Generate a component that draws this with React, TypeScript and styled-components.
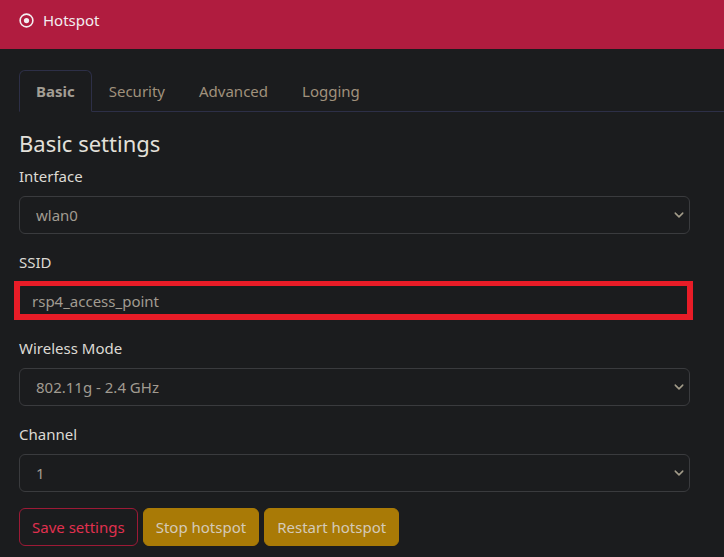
import React from "react";
import styled, { createGlobalStyle } from "styled-components";

const Global = createGlobalStyle`
  html, body { margin: 0; padding: 0; background: #1b1c1e; }
  body { font-family: "Noto Sans", "Open Sans", sans-serif; font-size: 15px; line-height: 24px; color: #dddad4; }
  * { box-sizing: border-box; }
`;

const Page = styled.div`
  min-height: 557px;
  background: #1b1c1e;
`;

const Header = styled.header`
  height: 49px;
  background: #b01c3f;
  display: flex;
  align-items: center;
  gap: 9px;
  padding: 0 0 9px 19px;
  color: #f3eef0;
  font-size: 15px;
`;

const Content = styled.main`
  padding: 21px 0 0 19px;
`;

const Tabs = styled.nav`
  display: flex;
  border-bottom: 1px solid #2d2f47;
`;

const Tab = styled.div<{ $active?: boolean }>`
  padding: 8px 16px;
  margin-bottom: -1px;
  border: 1px solid ${(p) => (p.$active ? "#2d2f47" : "transparent")};
  border-bottom-color: ${(p) => (p.$active ? "#1b1c1e" : "transparent")};
  border-radius: 6px 6px 0 0;
  color: ${(p) => (p.$active ? "#a39e94" : "#a0917c")};
  font-weight: ${(p) => (p.$active ? 700 : 400)};
  line-height: 24px;
`;

const Panel = styled.section`
  padding-right: 34px;
`;

const Heading = styled.h4`
  margin: 17px 0 6px;
  font-size: 22px;
  font-weight: 400;
  line-height: 29px;
  color: #e3e0da;
`;

const Group = styled.div`
  margin-bottom: 16px;
`;

const Label = styled.label`
  display: block;
  margin-bottom: 8px;
  color: #dddad4;
  line-height: 24px;
`;

const Select = styled.select`
  display: block;
  width: 100%;
  height: 38px;
  padding: 0 36px 0 16px;
  font: inherit;
  color: #a19b91;
  background-color: #1b1c1e;
  background-image: url("data:image/svg+xml,%3csvg xmlns='http://www.w3.org/2000/svg' viewBox='0 0 16 16'%3e%3cpath fill='none' stroke='%23a39c8a' stroke-linecap='round' stroke-linejoin='round' stroke-width='2.4' d='m2 5 6 6 6-6'/%3e%3c/svg%3e");
  background-repeat: no-repeat;
  background-position: right 4px center;
  background-size: 12px 10px;
  border: 1px solid #3a3b3e;
  border-radius: 6px;
  appearance: none;
  -webkit-appearance: none;
  outline: none;
`;

const Highlight = styled.div`
  position: relative;
`;

const Frame = styled.div`
  position: absolute;
  left: -5px;
  right: -3px;
  top: -1px;
  bottom: 0px;
  border: 6px solid #e81c27;
  border-top-width: 5px;
  pointer-events: none;
`;

const Input = styled.input`
  display: block;
  width: 100%;
  height: 38px;
  padding: 0 12px;
  font: inherit;
  color: #a19b91;
  background: #1b1c1e;
  border: 1px solid #3a3b3e;
  border-radius: 6px;
  outline: none;
`;

const Actions = styled.div`
  display: flex;
  gap: 5px;
`;

const Button = styled.button<{ $variant: "outline" | "warning" }>`
  height: 38px;
  padding: 0 12px;
  font: inherit;
  border-radius: 6px;
  border: 1px solid ${(p) => (p.$variant === "outline" ? "#9c1a36" : "#a97a06")};
  background: ${(p) => (p.$variant === "outline" ? "transparent" : "#a97a06")};
  color: ${(p) => (p.$variant === "outline" ? "#e0304f" : "#d4cab9")};
`;

const HotspotIcon = () => (
  <svg width="15" height="15" viewBox="0 0 16 16" fill="none">
    <circle cx="8" cy="8" r="6.8" stroke="#f3eef0" strokeWidth="1.7" />
    <circle cx="8" cy="8" r="2.8" fill="#f3eef0" />
  </svg>
);

export default function App() {
  return (
    <Page>
      <Global />
      <Header>
        <HotspotIcon />
        <span>Hotspot</span>
      </Header>
      <Content>
        <Tabs>
          <Tab $active>Basic</Tab>
          <Tab>Security</Tab>
          <Tab>Advanced</Tab>
          <Tab>Logging</Tab>
        </Tabs>
        <Panel>
          <Heading>Basic settings</Heading>
          <Group>
            <Label>Interface</Label>
            <Select defaultValue="wlan0">
              <option>wlan0</option>
            </Select>
          </Group>
          <Group>
            <Label>SSID</Label>
            <Highlight>
              <Input defaultValue="rsp4_access_point" />
              <Frame />
            </Highlight>
          </Group>
          <Group>
            <Label>Wireless Mode</Label>
            <Select defaultValue="g">
              <option value="g">802.11g - 2.4 GHz</option>
            </Select>
          </Group>
          <Group>
            <Label>Channel</Label>
            <Select defaultValue="1">
              <option>1</option>
            </Select>
          </Group>
          <Actions>
            <Button $variant="outline">Save settings</Button>
            <Button $variant="warning">Stop hotspot</Button>
            <Button $variant="warning">Restart hotspot</Button>
          </Actions>
        </Panel>
      </Content>
    </Page>
  );
}
